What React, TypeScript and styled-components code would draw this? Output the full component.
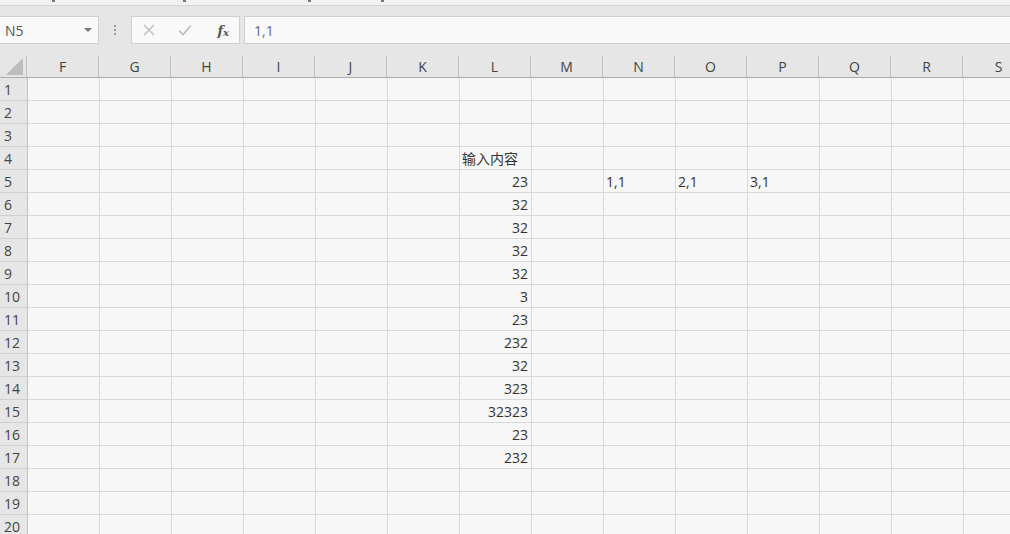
import React from "react";
import styled, { createGlobalStyle } from "styled-components";

const GlobalStyle = createGlobalStyle`
  html, body {
    margin: 0;
    padding: 0;
    background: #f7f7f7;
    overflow: hidden;
  }
  body {
    font-family: "Open Sans", "Noto Sans CJK SC", sans-serif;
  }
`;

const columns = ["F", "G", "H", "I", "J", "K", "L", "M", "N", "O", "P", "Q", "R", "S"];

// cell contents, keyed by "<col><row>"
const cellData: Record<string, { v: string; align?: "left" | "right" }> = {
  L4: { v: "输入内容", align: "left" },
  L5: { v: "23" },
  L6: { v: "32" },
  L7: { v: "32" },
  L8: { v: "32" },
  L9: { v: "32" },
  L10: { v: "3" },
  L11: { v: "23" },
  L12: { v: "232" },
  L13: { v: "32" },
  L14: { v: "323" },
  L15: { v: "32323" },
  L16: { v: "23" },
  L17: { v: "232" },
  N5: { v: "1,1", align: "left" },
  O5: { v: "2,1", align: "left" },
  P5: { v: "3,1", align: "left" },
};

const rows = Array.from({ length: 20 }, (_, i) => i + 1);
const marks = [52, 128, 122, 70];

export default function App() {
  return (
    <>
      <GlobalStyle />
      <Page>
        <TopStrip>
          {marks.map((m, i) => (
            <Mark key={i} gap={m} />
          ))}
        </TopStrip>
        <FormulaArea>
          <NameBox>
            <span>N5</span>
            <DropArrow />
          </NameBox>
          <Dots>
            <i />
            <i />
            <i />
          </Dots>
          <ButtonBox>
            <ToolButton>
              <svg width="12" height="12" viewBox="0 0 12 12">
                <path d="M1 1 L11 11 M11 1 L1 11" stroke="#bdbdbd" strokeWidth="1.4" fill="none" />
              </svg>
            </ToolButton>
            <ToolButton>
              <svg width="14" height="12" viewBox="0 0 14 12">
                <path d="M1 6.5 L5 10.5 L13 1.5" stroke="#bdbdbd" strokeWidth="1.6" fill="none" />
              </svg>
            </ToolButton>
            <FxButton>
              f<sub>x</sub>
            </FxButton>
          </ButtonBox>
          <FormulaInput>1,1</FormulaInput>
        </FormulaArea>
        <Sheet>
          <HeaderRow>
            <Corner>
              <svg width="17" height="17" viewBox="0 0 17 17">
                <path d="M17 0 L17 17 L0 17 Z" fill="#bcbcbc" />
              </svg>
            </Corner>
            {columns.map((c) => (
              <ColHeader key={c}>{c}</ColHeader>
            ))}
          </HeaderRow>
          {rows.map((r) => (
            <Row key={r}>
              <RowHeader>{r}</RowHeader>
              {columns.map((c) => {
                const cell = cellData[c + r];
                return (
                  <Cell key={c} align={cell?.align ?? "right"}>
                    {cell?.v}
                  </Cell>
                );
              })}
            </Row>
          ))}
        </Sheet>
      </Page>
    </>
  );
}

const Page = styled.div`
  width: 1010px;
  height: 534px;
  overflow: hidden;
  background: #f7f7f7;
`;

const TopStrip = styled.div`
  height: 5px;
  background: #f2f2f2;
  border-bottom: 1px solid #d4d4d4;
  display: flex;
  align-items: flex-start;
`;

const Mark = styled.span<{ gap: number }>`
  width: 3px;
  height: 2px;
  margin-left: ${(p) => p.gap}px;
  background: #777;
`;

const FormulaArea = styled.div`
  height: 28px;
  padding: 10px 0 12px 0;
  background: #e6e6e6;
  display: flex;
  align-items: stretch;
`;

const NameBox = styled.div`
  width: 99px;
  box-sizing: border-box;
  background: #f9f9f9;
  border: 1px solid #cfcfcf;
  border-left: none;
  display: flex;
  align-items: center;
  justify-content: space-between;
  padding: 0 6px 0 5px;
  font-size: 14px;
  color: #555;
`;

const DropArrow = styled.span`
  width: 0;
  height: 0;
  border-left: 4px solid transparent;
  border-right: 4px solid transparent;
  border-top: 4px solid #777;
`;

const Dots = styled.div`
  width: 32px;
  display: flex;
  flex-direction: column;
  align-items: center;
  justify-content: center;
  gap: 2px;
  i {
    width: 2px;
    height: 2px;
    background: #9a9a9a;
  }
`;

const ButtonBox = styled.div`
  width: 109px;
  box-sizing: border-box;
  background: #f9f9f9;
  border: 1px solid #cfcfcf;
  display: flex;
  align-items: center;
  padding: 0 6px 0 11px;
  gap: 0;
`;

const ToolButton = styled.div`
  width: 35px;
  display: flex;
  align-items: center;
  justify-content: flex-start;
`;

const FxButton = styled.div`
  flex: 1;
  text-align: right;
  padding-right: 4px;
  font-family: "DejaVu Serif", "Liberation Serif", serif;
  font-style: italic;
  font-weight: bold;
  font-size: 13px;
  color: #555;
  sub {
    font-size: 10px;
    vertical-align: -1px;
  }
`;

const FormulaInput = styled.div`
  flex: 1;
  margin-left: 4px;
  background: #f9f9f9;
  border: 1px solid #cfcfcf;
  border-right: none;
  display: flex;
  align-items: center;
  padding-left: 9px;
  font-size: 14px;
  color: #66668c;
`;

const Sheet = styled.div`
  display: flex;
  flex-direction: column;
`;

const HeaderRow = styled.div`
  display: flex;
  height: 21px;
  background: #e6e6e6;
  border-bottom: 1px solid #ababab;
`;

const Corner = styled.div`
  width: 27px;
  flex: none;
  border-right: 1px solid #c2c2c2;
  display: flex;
  align-items: flex-end;
  justify-content: flex-end;
  padding: 0 3px 2px 0;
  box-sizing: border-box;
`;

const ColHeader = styled.div`
  width: 72px;
  flex: none;
  box-sizing: border-box;
  border-right: 1px solid #c2c2c2;
  display: flex;
  align-items: center;
  justify-content: center;
  font-size: 14px;
  color: #444;
`;

const Row = styled.div`
  display: flex;
  height: 23px;
`;

const RowHeader = styled.div`
  width: 28px;
  flex: none;
  box-sizing: border-box;
  background: #e6e6e6;
  border-right: 1px solid #c2c2c2;
  border-bottom: 1px solid #d0d0d0;
  display: flex;
  align-items: center;
  padding-left: 4px;
  font-size: 14px;
  color: #444;
`;

const Cell = styled.div<{ align: "left" | "right" }>`
  width: 72px;
  flex: none;
  box-sizing: border-box;
  border-right: 1px solid #dadada;
  border-bottom: 1px solid #dadada;
  display: flex;
  align-items: center;
  justify-content: ${(p) => (p.align === "left" ? "flex-start" : "flex-end")};
  padding: 0 3px 0 2px;
  font-size: 14px;
  color: #333;
  white-space: nowrap;
`;
